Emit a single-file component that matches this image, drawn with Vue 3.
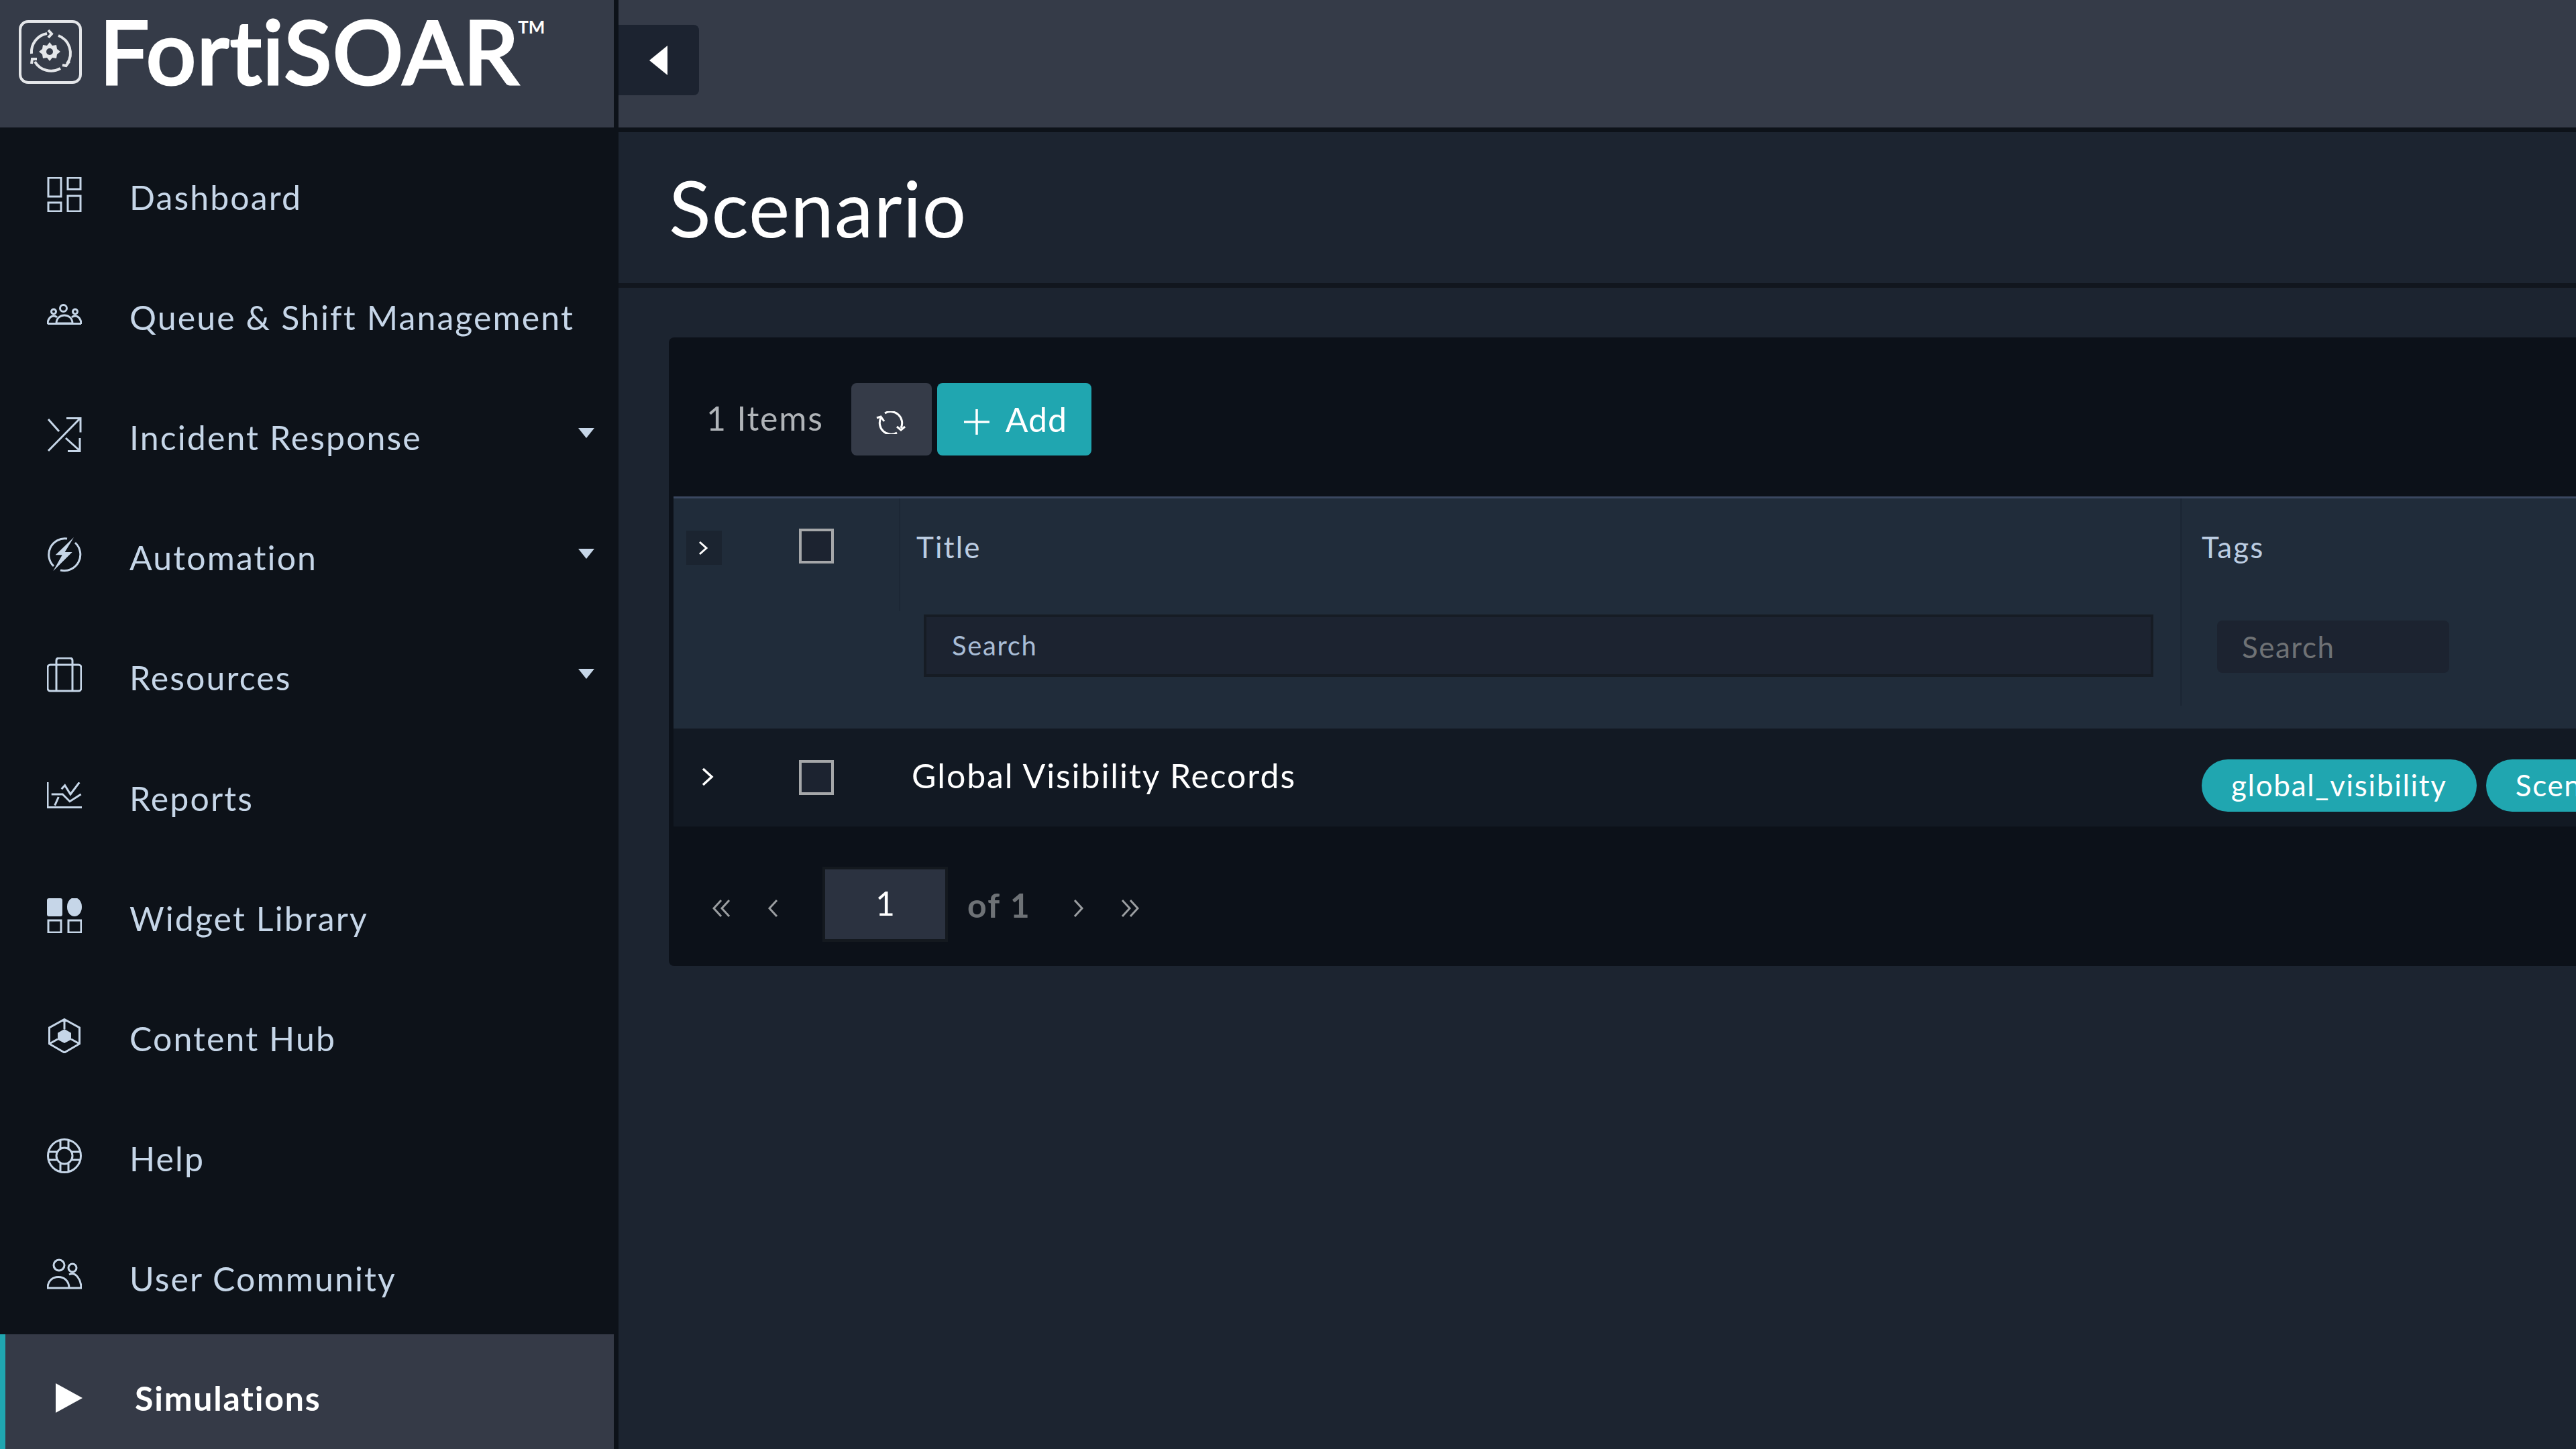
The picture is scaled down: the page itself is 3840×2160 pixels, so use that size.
<script setup>
const circle = (cx, cy, r) => `M${cx - r} ${cy}a${r} ${r} 0 1 0 ${r * 2} 0a${r} ${r} 0 1 0 ${-r * 2} 0z`

const nav = [
  { label: 'Dashboard', stroke: 'M2 1h19v28H2zM31 1h19v17H31zM2 38h19v13H2zM31 28h19v23H31z' },
  { label: 'Queue & Shift Management', vb: '0 0 52 32', h: 32, top: 2,
    stroke: circle(24.5, 6.5, 5) + circle(10, 11.5, 3.5) + circle(42, 11.5, 3.5) + 'M14 29c0-16 24-16 24 0zM1 30c0-7 4-12 9-12 2 0 3 0 5 2M51 30c0-7-4-12-9-12-2 0-3 0-5 2M1 29.500h50' },
  { label: 'Incident Response', caret: true, stroke: 'M2 50L49 2M29 1.500h21v21M2 3l16 18M28 31l21 19M49 31v19.500H31' },
  { label: 'Automation', caret: true, stroke: 'M30 2A24 24 0 0 0 10 43M42 8A24 24 0 0 1 20 49', fill: 'M40 0L12.700 26.300h10L9.300 50.300 37.700 22h-11z' },
  { label: 'Resources', caret: true, stroke: 'M5 11h42a4 4 0 0 1 4 4v31a4 4 0 0 1-4 4H5a4 4 0 0 1-4-4V15a4 4 0 0 1 4-4zM14 11v39M38 11v39M14 11V5q0-4 4-4h16q4 0 4 4v6' },
  { label: 'Reports', vb: '0 0 52 40', h: 40, stroke: 'M1 0v37.500h51M21.700 10.300L26.700 4.700 35 18 48.300 .3M6.700 18h16.600L34 28.700 50.700 18M11.700 34.700L17.300 22' },
  { label: 'Widget Library', stroke: 'M2 33h19v18H2zM32 33h19v18H32z', fill: 'M3 0h17a3 3 0 0 1 3 3v21a3 3 0 0 1-3 3H3a3 3 0 0 1-3-3V3a3 3 0 0 1 3-3z' + 'M30 13a11 14 0 1 0 22 0a11 14 0 1 0-22 0z' },
  { label: 'Content Hub', stroke: 'M26 1.500L48.500 14v24L26 51 3.500 38V14zM26 1.500V16M3.500 38L16 31M48.500 38L36 31', fill: 'M26 16l10 5.700v10L26 37l-10-5.300v-10z' },
  { label: 'Help', stroke: circle(26, 26, 24.5) + circle(26, 26, 12) + 'M20 3v12M32 3v12M20 37v12M32 37v12M3 20h12M3 32h12M37 20h12M37 32h12' },
  { label: 'User Community', stroke: circle(18, 10, 8) + circle(38, 14, 6) + 'M1 44c0-22 32-22 32 0zM33 24c10-5 18 8 18 20H33' }
]

const refresh = 'M13 3A17 17 0 0 1 37 25M31 23l6 5 6-5M31 32A17 17 0 0 1 7 10M1 10l6-2 5 7'
</script>

<template>
  <div class="screen">
    <aside class="sidebar">
      <div class="brand">
        <svg class="brand-icon" viewBox="0 0 94 95">
          <rect x="2" y="2" width="90" height="91" rx="12" />
          <path d="M19 50A28 28 0 0 1 42 20M44 15l5 5.500-5 5.500M59 23A28 28 0 0 1 72 65M65 67l5.500 1 5-7M62 72A28 28 0 0 1 24 62M19 65l1-7h7" />
          <path class="filled" d="M46 33l4 5 6-1 1 6 5 4-5 4-1 6-6-1-4 5-4-5-6 1-1-6-5-4 5-4 1-6 6 1z" />
          <circle class="hole" cx="46" cy="47" r="5" />
        </svg>
        <span class="brand-name">FortiSOAR</span><span class="brand-tm">TM</span>
      </div>
      <nav class="nav">
        <a v-for="item in nav" :key="item.label" class="nav-item">
          <span class="nav-icon">
            <svg :viewBox="item.vb || '0 0 52 52'" width="52" :height="item.h || 52">
              <path :d="item.stroke" />
              <path v-if="item.fill" class="filled" :d="item.fill" />
            </svg>
          </span>
          <span class="nav-label">{{ item.label }}</span>
          <span v-if="item.caret" class="caret"></span>
        </a>
        <a class="nav-item active">
          <span class="play"></span>
          <span class="nav-label">Simulations</span>
        </a>
      </nav>
    </aside>

    <main class="main">
      <header class="topbar">
        <button class="toggle"><span class="toggle-arrow"></span></button>
      </header>
      <div class="page-head">
        <h1>Scenario</h1>
      </div>
      <section class="content">
        <div class="card">
          <div class="toolbar">
            <span class="count">1 Items</span>
            <button class="btn-refresh">
              <svg viewBox="0 0 44 34" width="44" height="34"><path :d="refresh" /></svg>
            </button>
            <button class="btn-add">
              <svg viewBox="0 0 38 38" width="38" height="38"><path d="M19 0v38M0 19h38" /></svg>
              <span>Add</span>
            </button>
          </div>

          <div class="grid head">
            <div class="cell-expand">
              <span class="expand-btn">
                <svg viewBox="0 0 16 24" width="16" height="24"><path d="M3 3l10 9-10 9" /></svg>
              </span>
              <span class="check"></span>
            </div>
            <div class="cell-title">
              <div class="col-name">Title</div>
              <div class="search-wrap"><div class="search">Search</div></div>
            </div>
            <div class="cell-tags">
              <div class="col-name">Tags</div>
              <div class="tag-search">Search</div>
            </div>
          </div>

          <div class="grid row">
            <div class="cell-expand">
              <svg class="row-chevron" viewBox="0 0 20 30" width="20" height="30"><path d="M3 3l13 12-13 12" /></svg>
              <span class="check"></span>
            </div>
            <div class="row-title">Global Visibility Records</div>
            <div class="chips">
              <span class="chip">global_visibility</span>
              <span class="chip">Scenario</span>
            </div>
          </div>

          <div class="pager">
            <svg class="pager-icon first" viewBox="0 0 28 30" width="28" height="30"><path d="M13 3L2 15l11 12M25 3L14 15l11 12" /></svg>
            <svg class="pager-icon prev" viewBox="0 0 16 30" width="16" height="30"><path d="M14 3L3 15l11 12" /></svg>
            <div class="page-input">1</div>
            <span class="page-of">of 1</span>
            <svg class="pager-icon next" viewBox="0 0 16 30" width="16" height="30"><path d="M2 3l11 12L2 27" /></svg>
            <svg class="pager-icon last" viewBox="0 0 28 30" width="28" height="30"><path d="M3 3l11 12L3 27M15 3l11 12-11 12" /></svg>
          </div>
        </div>
      </section>
    </main>
  </div>
</template>

<style>
html, body { margin: 0; background: #1c2430; overflow: hidden; }
</style>

<style scoped>
* { box-sizing: border-box; }

.screen {
  width: 3840px;
  height: 2160px;
  display: flex;
  overflow: hidden;
  font-family: Lato, "Liberation Sans", sans-serif;
  background: #1c2430;
}

svg { fill: none; stroke: currentColor; stroke-width: 3; display: block; flex: none; }
svg .filled { fill: currentColor; stroke: none; }

/* sidebar */
.sidebar {
  width: 922px;
  flex: none;
  background: #0d1219;
  border-right: 7px solid #0d1219;
}
.brand {
  height: 190px;
  background: #353b48;
  display: flex;
  align-items: flex-start;
  padding: 30px 0 0 28px;
  color: #fff;
}
.brand-icon { width: 94px; height: 95px; color: #e4e6e9; stroke-width: 4; }
.brand-icon .hole { fill: #353b48; stroke: none; }
.brand-name {
  font-size: 132px;
  font-weight: 500;
  line-height: 132px;
  margin: -21px 0 0 26px;
  letter-spacing: 0.7px;
  -webkit-text-stroke: 3px #fff;
}
.brand-tm { font-size: 26px; font-weight: 700; line-height: 20px; margin-left: -2px; }
.nav { padding-top: 7px; }
.nav-item {
  height: 179.2px;
  padding-top: 14px;
  display: flex;
  align-items: center;
  color: #c6d6e8;
  font-size: 50px;
  letter-spacing: 2.1px;
}
.nav-icon { width: 52px; margin-left: 70px; margin-right: 71px; display: flex; justify-content: center; position: relative; top: -4px; }
.nav-label { flex: 1; white-space: nowrap; }
.caret {
  width: 0;
  height: 0;
  margin-right: 29px;
  position: relative;
  top: -6px;
  border-left: 12px solid transparent;
  border-right: 12px solid transparent;
  border-top: 15px solid #c6d6e8;
}
.active {
  background: #353a47;
  border-left: 8px solid #20a6b0;
  color: #fff;
  font-weight: 700;
  letter-spacing: 1.8px;
  padding-top: 12px;
}
.play {
  width: 0;
  height: 0;
  margin-left: 75px;
  margin-right: 78px;
  border-left: 40px solid #fff;
  border-top: 22px solid transparent;
  border-bottom: 22px solid transparent;
}

/* main */
.main { flex: 1; min-width: 0; display: flex; flex-direction: column; }
.topbar {
  height: 197px;
  flex: none;
  background: #353b48;
  border-bottom: 7px solid #0d1219;
  padding-top: 37px;
}
.toggle {
  width: 120px;
  height: 105px;
  background: #1c2330;
  border: 0;
  border-radius: 0 8px 8px 0;
  padding: 0 0 0 46px;
  display: flex;
  align-items: center;
}
.toggle-arrow {
  width: 0;
  height: 0;
  border-right: 27px solid #fff;
  border-top: 22px solid transparent;
  border-bottom: 22px solid transparent;
}
.page-head {
  height: 232px;
  flex: none;
  background: #1c2430;
  border-bottom: 7px solid #11161e;
  display: flex;
  align-items: center;
  padding-left: 75px;
}
h1 {
  margin: 0;
  color: #fff;
  font-size: 116px;
  font-weight: 400;
  letter-spacing: 1px;
}
.content { flex: 1; padding: 74px 0 0 75px; min-width: 0; }
.card {
  height: 937px;
  width: 2843px;
  background: #0c1119;
  border-radius: 8px 0 0 8px;
  padding-left: 7px;
}
.toolbar {
  height: 237px;
  display: flex;
  align-items: center;
  padding: 7px 0 0 49px;
}
.count { color: #b0b4b8; font-size: 50px; letter-spacing: 1.8px; margin-right: 41px; margin-top: -4px; }
.btn-refresh, .btn-add {
  height: 108px;
  border: 0;
  border-radius: 8px;
  display: flex;
  align-items: center;
  color: #fff;
}
.btn-refresh { width: 120px; background: #353b48; justify-content: center; margin-right: 8px; padding: 10px 2px 0 0; }
.btn-add {
  width: 230px;
  background: #20a6b0;
  padding: 0 0 0 40px;
  font-family: inherit;
  font-size: 50px;
  letter-spacing: 1px;
  gap: 24px;
}
.btn-add svg { stroke-width: 3.5; position: relative; top: 4px; }

.grid { display: grid; grid-template-columns: 336px 1910px 1fr; width: 2836px; overflow: hidden; }
.head { height: 346px; background: #202c3a; border-top: 3px solid #3a4760; }
.cell-expand { display: flex; align-items: flex-start; }
.head .cell-expand { padding: 48px 0 0 19px; }
.expand-btn {
  width: 53px;
  height: 51px;
  padding-right: 4px;
  background: #1b2430;
  color: #fff;
  display: flex;
  align-items: center;
  justify-content: center;
}
.check {
  width: 52px;
  height: 52px;
  border: 4px solid #a5a7a9;
  background: #1c2330;
}
.head .check { margin-left: 115px; margin-top: -3px; }
.cell-title { border-left: 2px solid #1c2735; height: 168px; padding-left: 24px; }
.col-name { color: #bccde2; font-size: 44px; letter-spacing: 2.2px; line-height: 58px; padding-top: 43px; }
.search-wrap { padding: 72px 0 0 11px; }
.search {
  width: 1833px;
  height: 93px;
  background: #1c2330;
  border: 4px solid #161c24;
  color: #a9bdd6;
  font-size: 40px;
  letter-spacing: 1.6px;
  line-height: 85px;
  padding-left: 38px;
}
.cell-tags { border-left: 3px solid #1c2735; height: 309px; padding-left: 29px; }
.tag-search {
  width: 346px;
  height: 78px;
  margin: 81px 0 0 23px;
  background: #1c2330;
  border-radius: 8px;
  color: #6f7275;
  font-size: 44px;
  letter-spacing: 1.5px;
  line-height: 78px;
  padding-left: 37px;
}
.row { height: 146px; background: #121923; align-items: center; }
.row .cell-expand { align-items: center; padding-left: 41px; }
.row-chevron { color: #fff; stroke-width: 3.5; margin-top: -2px; }
.row .check { margin-left: 126px; }
.row-title {
  color: #fff;
  font-size: 50px;
  letter-spacing: 1.9px;
  padding-left: 19px;
  margin-top: -6px;
  white-space: nowrap;
}
.chips { display: flex; gap: 14px; margin-left: 4px; padding-left: 28px; padding-top: 24px; }
.chip {
  height: 78px;
  padding: 0 44px;
  border-radius: 39px;
  background: #20a6b0;
  color: #fff;
  font-size: 44px;
  letter-spacing: 1.7px;
  line-height: 76px;
  white-space: nowrap;
}
.pager { height: 208px; display: flex; align-items: center; padding: 30px 0 0 58px; color: #9b9ea1; }
.pager-icon { stroke-width: 3; margin-top: 6px; }
.prev { margin-left: 54px; }
.page-input {
  width: 187px;
  height: 112px;
  margin: -7px 0 0 66px;
  background: #2b3240;
  border: 4px solid #14191f;
  color: #fff;
  font-size: 50px;
  line-height: 100px;
  text-align: center;
}
.page-of { color: #6e7276; font-size: 50px; font-weight: 700; letter-spacing: 2.2px; margin-left: 29px; margin-top: -4px; }
.next { margin-left: 63px; }
.last { margin-left: 54px; }
</style>
